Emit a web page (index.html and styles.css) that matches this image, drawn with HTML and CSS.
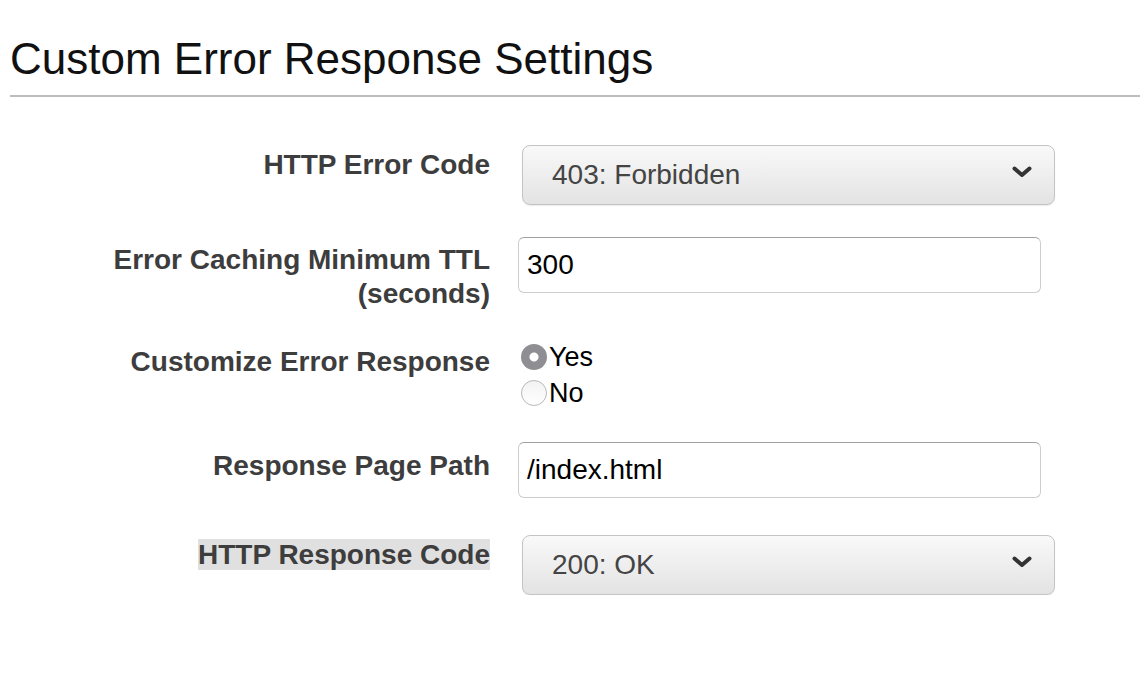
FILE: index.html
```html
<!DOCTYPE html>
<html>
<head>
<meta charset="utf-8">
<link rel="stylesheet" href="styles.css">
</head>
<body>
<div class="page">
  <h1 class="title">Custom Error Response Settings</h1>
  <div class="form">
    <div class="row row-1">
      <div class="label label-select">HTTP Error Code</div>
      <div class="control">
        <div class="select">
          <span class="select-text">403: Forbidden</span>
          <svg class="chev" width="20" height="12" viewBox="0 0 20 12"><polyline points="2.5,2.5 10,9 17.5,2.5" fill="none" stroke="#333" stroke-width="4" stroke-linecap="round" stroke-linejoin="round"/></svg>
        </div>
      </div>
    </div>
    <div class="row row-2">
      <div class="label label-input">Error Caching Minimum TTL<br>(seconds)</div>
      <div class="control">
        <div class="input">300</div>
      </div>
    </div>
    <div class="row row-3">
      <div class="label label-radio">Customize Error Response</div>
      <div class="control radios">
        <label class="radio-opt"><span class="radio checked"></span><span>Yes</span></label>
        <label class="radio-opt"><span class="radio"></span><span>No</span></label>
      </div>
    </div>
    <div class="row row-4">
      <div class="label label-input2">Response Page Path</div>
      <div class="control">
        <div class="input">/index.html</div>
      </div>
    </div>
    <div class="row row-5">
      <div class="label label-select"><span class="hl">HTTP Response Code</span></div>
      <div class="control">
        <div class="select">
          <span class="select-text">200: OK</span>
          <svg class="chev" width="20" height="12" viewBox="0 0 20 12"><polyline points="2.5,2.5 10,9 17.5,2.5" fill="none" stroke="#333" stroke-width="4" stroke-linecap="round" stroke-linejoin="round"/></svg>
        </div>
      </div>
    </div>
  </div>
</div>
</body>
</html>
```
FILE: styles.css
```css
html, body {
  margin: 0;
  padding: 0;
  background: #fff;
}
body {
  font-family: "Liberation Sans", Arial, Helvetica, sans-serif;
}
.page {
  width: 1140px;
}
.title {
  margin: 34px 0 0 10px;
  padding: 0 0 11px 0;
  font-size: 44px;
  line-height: 50px;
  font-weight: normal;
  color: #111;
  border-bottom: 2px solid #bdbdbd;
}
.form {
  display: flex;
  flex-direction: column;
  margin-top: 48px;
}
.row {
  display: grid;
  grid-template-columns: 490px 1fr;
  column-gap: 28px;
  align-items: start;
}
.row-1 { margin-bottom: 32px; }
.row-2 { margin-bottom: 28px; }
.row-3 { margin-bottom: 31px; }
.row-4 { margin-bottom: 37px; }
.label {
  text-align: right;
  font-size: 28px;
  line-height: 34px;
  font-weight: bold;
  color: #3d3d3d;
}
.label-select { padding-top: 3px; }
.label-input { padding-top: 6px; }
.label-radio { padding-top: 6px; }
.label-input2 { padding-top: 7px; }
.hl {
  background: #e0e0e0;
}
.control {
  display: flex;
  flex-direction: column;
}
.select {
  margin-left: 4px;
  width: 533px;
  height: 60px;
  box-sizing: border-box;
  border: 1px solid #c4c4c4;
  border-radius: 8px;
  background: linear-gradient(#f9f9f9, #e3e3e3);
  box-shadow: 0 1px 1px rgba(0,0,0,0.08);
  display: flex;
  align-items: center;
  justify-content: space-between;
  padding: 0 22px 0 29px;
}
.select-text {
  font-size: 28px;
  color: #444;
}
.chev {
  display: block;
  margin-top: -6px;
}
.input {
  width: 523px;
  height: 56px;
  box-sizing: border-box;
  border: 1px solid #cdcdcd;
  border-top-color: #a0a0a0;
  border-radius: 6px;
  background: #fff;
  font-size: 28px;
  color: #000;
  padding-left: 8px;
  display: flex;
  align-items: center;
}
.radios {
  margin-left: 3px;
}
.radio-opt {
  display: flex;
  align-items: center;
  font-size: 27px;
  line-height: 36px;
  color: #000;
}
.radio {
  width: 26px;
  height: 26px;
  box-sizing: border-box;
  border-radius: 50%;
  border: 1px solid #b8b8b8;
  background: linear-gradient(#f2f2f2, #fff);
  margin-right: 2px;
  flex: none;
}
.radio.checked {
  border: none;
  background: radial-gradient(circle, #fff 0, #fff 4px, #8f8f93 5px);
}
```
